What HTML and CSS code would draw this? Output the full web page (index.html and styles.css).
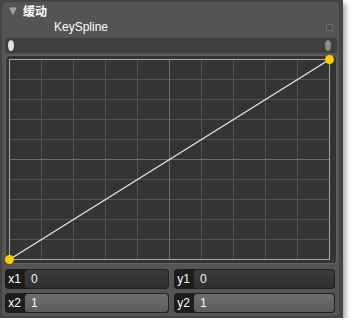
FILE: index.html
```html
<!DOCTYPE html>
<html lang="zh">
<head>
    <meta charset="UTF-8">
    <title>缓动</title>
    <link rel="stylesheet" href="styles.css">
</head>
<body>
    <div class="panel">
        <div class="inner">
            <div class="header">
                <span class="arrow">&#9660;</span>
                <span class="title">缓动</span>
            </div>
            <div class="sub">
                <span class="name">KeySpline</span>
                <span class="pin"></span>
            </div>
            <div class="slider">
                <span class="knob knob-left"></span>
                <span class="knob knob-right"></span>
            </div>
            <div class="graph">
                <svg class="plot" width="321" height="201" viewBox="0 0 321 201">
                    <g stroke="#525252" stroke-width="1">
                        <line x1="32.5" y1="0" x2="32.5" y2="201"/>
                        <line x1="64.5" y1="0" x2="64.5" y2="201"/>
                        <line x1="96.5" y1="0" x2="96.5" y2="201"/>
                        <line x1="128.5" y1="0" x2="128.5" y2="201"/>
                        <line x1="192.5" y1="0" x2="192.5" y2="201"/>
                        <line x1="224.5" y1="0" x2="224.5" y2="201"/>
                        <line x1="256.5" y1="0" x2="256.5" y2="201"/>
                        <line x1="288.5" y1="0" x2="288.5" y2="201"/>
                        <line x1="0" y1="20.5" x2="321" y2="20.5"/>
                        <line x1="0" y1="40.5" x2="321" y2="40.5"/>
                        <line x1="0" y1="60.5" x2="321" y2="60.5"/>
                        <line x1="0" y1="80.5" x2="321" y2="80.5"/>
                        <line x1="0" y1="120.5" x2="321" y2="120.5"/>
                        <line x1="0" y1="140.5" x2="321" y2="140.5"/>
                        <line x1="0" y1="160.5" x2="321" y2="160.5"/>
                        <line x1="0" y1="180.5" x2="321" y2="180.5"/>
                    </g>
                    <g stroke="#6e6e6e" stroke-width="1">
                        <line x1="160.5" y1="0" x2="160.5" y2="201"/>
                        <line x1="0" y1="100.5" x2="321" y2="100.5"/>
                    </g>
                    <rect x="0.5" y="0.5" width="320" height="200" fill="none" stroke="#a8a8a8"/>
                    <line x1="0.5" y1="200.5" x2="320.5" y2="0.5" stroke="#e6e6e6" stroke-width="1.3"/>
                    <circle cx="0.5" cy="200.5" r="4.5" fill="#ffcc00"/>
                    <circle cx="320.5" cy="0.5" r="4.5" fill="#ffcc00"/>
                </svg>
            </div>
            <div class="inputs">
                <div class="field">
                    <span class="label">x1</span>
                    <span class="box">0</span>
                </div>
                <div class="field">
                    <span class="label">y1</span>
                    <span class="box">0</span>
                </div>
                <div class="field">
                    <span class="label">x2</span>
                    <span class="box box-light">1</span>
                </div>
                <div class="field">
                    <span class="label">y2</span>
                    <span class="box box-light">1</span>
                </div>
            </div>
        </div>
    </div>
</body>
</html>
```

FILE: styles.css
```css
* {
    margin: 0;
    padding: 0;
    box-sizing: border-box;
}

body {
    background: #ffffff;
    font-family: "Liberation Sans", "Noto Sans CJK SC", sans-serif;
    font-size: 12px;
}

.panel {
    width: 343px;
    height: 318px;
    background: #444444;
    padding: 2px 4px 2px 2px;
    box-shadow: 3px 4px 5px rgba(0, 0, 0, .35);
}

.inner {
    height: 100%;
    background: #545454;
    border-radius: 4px;
    padding: 0 2px 0 3px;
    display: flex;
    flex-direction: column;
}

.header {
    height: 17px;
    display: flex;
    align-items: center;
    padding-left: 4px;
}

.arrow {
    color: #a0a0a0;
    font-family: "DejaVu Sans", sans-serif;
    font-size: 10px;
    width: 14px;
}

.title {
    color: #ffffff;
    font-weight: bold;
    font-family: "Noto Sans CJK SC", sans-serif;
    font-size: 12px;
}

.sub {
    height: 18px;
    display: flex;
    align-items: center;
    justify-content: space-between;
    padding: 0 4px 2px 49px;
}

.name {
    color: #ffffff;
}

.pin {
    width: 7px;
    height: 7px;
    border: 1px solid #6a6a6a;
    background: #4c4c4c;
}

.slider {
    margin-top: 1px;
    height: 15px;
    background: #3f3f3f;
    border-radius: 2px;
    display: flex;
    align-items: center;
    justify-content: space-between;
    padding: 0 6px 0 3px;
}

.knob {
    width: 6px;
    height: 11px;
    border-radius: 50%;
}
.knob-left {
    background: #e2e2e2;
}
.knob-right {
    background: #8c8c8c;
}

.graph {
    margin-top: 2px;
    height: 209px;
    background: #343434;
    border: 1px solid #626262;
    border-radius: 4px;
    padding: 3px 6px 3px 3px;
}

.plot {
    display: block;
    overflow: visible;
}

.inputs {
    margin-top: 5px;
    display: grid;
    grid-template-columns: 164px 161px;
    column-gap: 5px;
    row-gap: 4px;
}

.field {
    height: 20px;
    display: flex;
    background: #1c1c1c;
    border-radius: 4px;
}

.label {
    width: 19px;
    color: #ffffff;
    display: flex;
    align-items: center;
    justify-content: center;
    font-size: 12px;
}

.box {
    flex: 1;
    border: 1px solid #222222;
    border-radius: 4px;
    background: linear-gradient(#3c3c3c, #2f2f2f);
    color: #eef4ff;
    display: flex;
    align-items: center;
    padding-left: 6px;
}

.box-light {
    background: linear-gradient(#6e6e6e, #5c5c5c);
}
```
